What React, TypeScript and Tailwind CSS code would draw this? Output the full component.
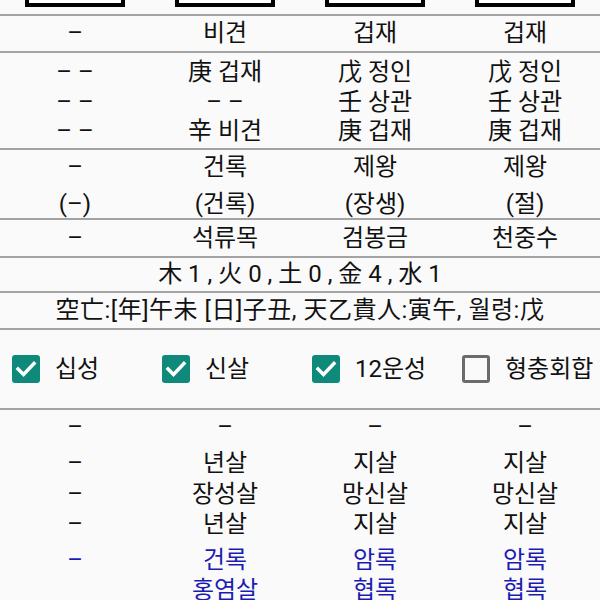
import React from "react";

const cols = [0, 1, 2, 3];

function Line() {
  return <div className="h-[2px] bg-[#a3a3a3]" />;
}

function Check({ on }: { on: boolean }) {
  if (!on) {
    return <div className="w-[28px] h-[28px] rounded-[3px] border-[3px] border-[#6b6b6b] bg-[#fafafa] shrink-0" />;
  }
  return (
    <div className="w-[28px] h-[28px] rounded-[3px] bg-[#0f8a7a] shrink-0 flex items-center justify-center">
      <svg width="28" height="28" viewBox="0 0 28 28">
        <polyline points="6,14 11.5,19.5 22,8.5" fill="none" stroke="#ffffff" strokeWidth="3.4" strokeLinecap="square" />
      </svg>
    </div>
  );
}

export default function App() {
  const jijang = [
    ["– –", "– –", "– –"],
    ["庚 겁재", "– –", "辛 비견"],
    ["戊 정인", "壬 상관", "庚 겁재"],
    ["戊 정인", "壬 상관", "庚 겁재"],
  ];
  const unseong = [
    ["–", "(–)"],
    ["건록", "(건록)"],
    ["제왕", "(장생)"],
    ["제왕", "(절)"],
  ];
  const napeum = ["–", "석류목", "검봉금", "천중수"];
  const sinsal = [
    ["–", "–", "–"],
    ["년살", "장성살", "년살"],
    ["지살", "망신살", "지살"],
    ["지살", "망신살", "지살"],
  ];
  const blue = [
    ["–"],
    ["건록", "홍염살"],
    ["암록", "협록"],
    ["암록", "협록"],
  ];
  const checks = [
    { label: "십성", on: true },
    { label: "신살", on: true },
    { label: "12운성", on: true },
    { label: "형충회합", on: false },
  ];

  return (
    <div className="w-[600px] h-[600px] overflow-hidden bg-[#fafafa] text-[#111111] text-[24px] font-[Roboto,'Noto_Sans_CJK_KR',sans-serif]">
      {/* top boxes */}
      <div className="h-[14px] grid grid-cols-4">
        {cols.map((c) => (
          <div key={c} className="pl-[25px]">
            <div className="w-[100px] h-[7px] bg-white border-x-[4px] border-b-[4px] border-black" />
          </div>
        ))}
      </div>
      <Line />
      <div className="h-[35px] grid grid-cols-4 items-center text-center leading-[29px]">
        <div>–</div>
        <div>비견</div>
        <div>겁재</div>
        <div>겁재</div>
      </div>
      <Line />
      <div className="h-[95px] grid grid-cols-4 text-center leading-[29.5px] pt-[5px]">
        {jijang.map((col, i) => (
          <div key={i} className="flex flex-col">
            {col.map((t, j) => (
              <div key={j}>{t}</div>
            ))}
          </div>
        ))}
      </div>
      <Line />
      <div className="h-[68px] grid grid-cols-4 text-center leading-[29px] pt-[3px]">
        {unseong.map((col, i) => (
          <div key={i} className="flex flex-col gap-[8px]">
            <div>{col[0]}</div>
            <div>{col[1]}</div>
          </div>
        ))}
      </div>
      <Line />
      <div className="h-[36px] grid grid-cols-4 items-center text-center leading-[29px]">
        {napeum.map((t, i) => (
          <div key={i}>{t}</div>
        ))}
      </div>
      <Line />
      <div className="h-[33px] flex items-center justify-center leading-[29px]">木 1 , 火 0 , 土 0 , 金 4 , 水 1</div>
      <Line />
      <div className="h-[35px] flex items-center justify-center leading-[29px] tracking-[0.5px]">空亡:[年]午未 [日]子丑, 天乙貴人:寅午, 월령:戊</div>
      <Line />
      <div className="h-[78px] grid grid-cols-4 items-center">
        {checks.map((c, i) => (
          <div key={i} className="flex items-center pl-[12px] gap-[15px]">
            <Check on={c.on} />
            <span className="leading-[29px]">{c.label}</span>
          </div>
        ))}
      </div>
      <Line />
      <div className="h-[35px] grid grid-cols-4 items-center text-center leading-[29px]">
        {cols.map((c) => (
          <div key={c}>–</div>
        ))}
      </div>
      <div className="grid grid-cols-4 text-center leading-[30.5px] pt-[3px]">
        {sinsal.map((col, i) => (
          <div key={i} className="flex flex-col">
            {col.map((t, j) => (
              <div key={j}>{t}</div>
            ))}
          </div>
        ))}
      </div>
      <div className="grid grid-cols-4 text-center leading-[30px] pt-[5px] text-[#1c1cb4]">
        {blue.map((col, i) => (
          <div key={i} className="flex flex-col">
            {col.map((t, j) => (
              <div key={j}>{t}</div>
            ))}
          </div>
        ))}
      </div>
    </div>
  );
}
